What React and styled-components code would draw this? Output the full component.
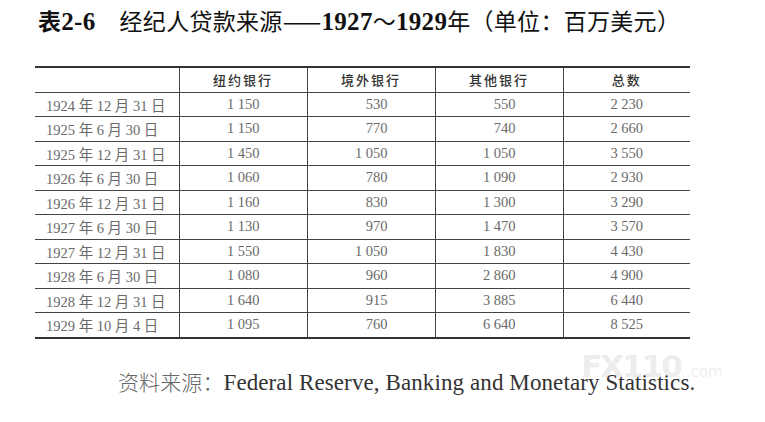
import React from 'react';
import styled, { createGlobalStyle } from 'styled-components';

const GlobalStyle = createGlobalStyle`
  html, body {
    margin: 0;
    padding: 0;
    background: #fff;
  }
`;

const rows = [
  ['1924 年 12 月 31 日', '1 150', '530', '550', '2 230'],
  ['1925 年 6 月 30 日', '1 150', '770', '740', '2 660'],
  ['1925 年 12 月 31 日', '1 450', '1 050', '1 050', '3 550'],
  ['1926 年 6 月 30 日', '1 060', '780', '1 090', '2 930'],
  ['1926 年 12 月 31 日', '1 160', '830', '1 300', '3 290'],
  ['1927 年 6 月 30 日', '1 130', '970', '1 470', '3 570'],
  ['1927 年 12 月 31 日', '1 550', '1 050', '1 830', '4 430'],
  ['1928 年 6 月 30 日', '1 080', '960', '2 860', '4 900'],
  ['1928 年 12 月 31 日', '1 640', '915', '3 885', '6 440'],
  ['1929 年 10 月 4 日', '1 095', '760', '6 640', '8 525'],
];

const heads = ['纽约银行', '境外银行', '其他银行', '总数'];

const Page = styled.div`
  position: relative;
  width: 765px;
  height: 422px;
  overflow: hidden;
  padding: 6px 0 0 38px;
  box-sizing: border-box;
`;

const Title = styled.h1`
  margin: 0;
  font-family: "Noto Sans CJK SC", sans-serif;
  font-weight: 400;
  font-size: 23px;
  line-height: 28px;
  color: #111;
  white-space: nowrap;
  letter-spacing: 0.3px;
`;

const Label = styled.span`
  font-weight: 700;
  margin-right: 24px;
`;

const Num = styled.span`
  font-family: "Liberation Serif", serif;
  font-weight: 700;
  font-size: 25px;
`;

const Table = styled.table`
  margin: 30px 0 0 -3px;
  border-collapse: collapse;
  table-layout: fixed;
  width: 655px;
  border-top: 2px solid #333;
  border-bottom: 2.5px solid #333;
`;

const Th = styled.th`
  height: 23.5px;
  padding: 0;
  font-family: "Noto Sans CJK SC", sans-serif;
  font-weight: 500;
  font-size: 13px;
  letter-spacing: 2px;
  color: #333;
  text-align: center;
  border-bottom: 1.5px solid #444;
  border-left: ${p => (p.$first ? 'none' : '1.5px solid #444')};
`;

const Td = styled.td`
  height: 23.5px;
  padding: 0 ${p => (p.$date ? '0 0 11px' : '47px 0 0')};
  font-family: "Liberation Serif", "Noto Sans CJK SC", serif;
  font-size: 14.5px;
  color: #6a6a6a;
  white-space: nowrap;
  text-align: ${p => (p.$date ? 'left' : 'right')};
  border-top: 1.5px solid #444;
  border-left: ${p => (p.$date ? 'none' : '1.5px solid #444')};
`;

const Source = styled.p`
  margin: 29px 0 0 80px;
  font-family: "Liberation Serif", serif;
  font-size: 23px;
  line-height: 26px;
  color: #333;
  white-space: nowrap;
  letter-spacing: 0.1px;
`;

const SourceLabel = styled.span`
  font-family: "Noto Sans CJK SC", sans-serif;
  font-weight: 300;
  font-size: 21px;
  color: #666;
`;

const Watermark = styled.div`
  position: absolute;
  left: 581px;
  top: 347px;
  font-family: "DejaVu Sans", sans-serif;
  font-weight: 700;
  color: rgba(215, 215, 215, 0.45);
  white-space: nowrap;
  letter-spacing: -2px;
  font-size: 31px;
  line-height: 38px;
`;

const Dot = styled.span`
  font-size: 15px;
  font-weight: 400;
  letter-spacing: 0;
  margin-left: 5px;
`;

export default function App() {
  return (
    <Page>
      <GlobalStyle />
      <Title>
        <Label>表<Num>2-6</Num></Label>
        经纪人贷款来源——<Num>1927</Num>～<Num>1929</Num>年（单位：百万美元）
      </Title>
      <Table>
        <colgroup>
          <col style={{ width: 144 }} />
          <col style={{ width: 128 }} />
          <col style={{ width: 128 }} />
          <col style={{ width: 128 }} />
          <col style={{ width: 127 }} />
        </colgroup>
        <thead>
          <tr>
            <Th $first />
            {heads.map(h => <Th key={h}>{h}</Th>)}
          </tr>
        </thead>
        <tbody>
          {rows.map(r => (
            <tr key={r[0]}>
              {r.map((c, i) => <Td key={i} $date={i === 0}>{c}</Td>)}
            </tr>
          ))}
        </tbody>
      </Table>
      <Source>
        <SourceLabel>资料来源：</SourceLabel>Federal Reserve, Banking and Monetary Statistics.
      </Source>
      <Watermark>FX110<Dot>.com</Dot></Watermark>
    </Page>
  );
}
